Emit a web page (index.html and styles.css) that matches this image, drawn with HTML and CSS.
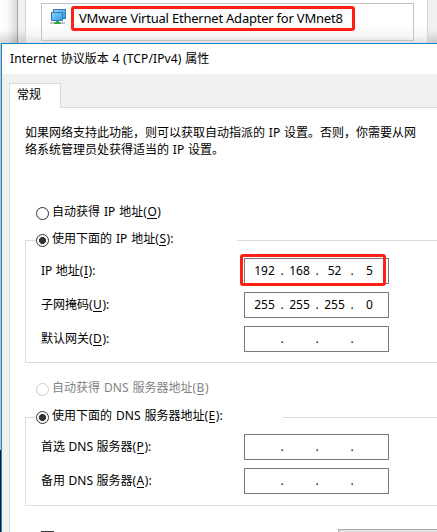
FILE: index.html
```
<!DOCTYPE html>
<html lang="zh-CN">
<head>
<meta charset="utf-8">
<title>Internet 协议版本 4 (TCP/IPv4) 属性</title>
<link rel="stylesheet" href="styles.css">
</head>
<body>
<div class="screen">
  <div class="parent">
    <div class="parent-page">
      <div class="adapter">
        <svg class="adapter-icon" width="18" height="17" viewBox="0 0 18 17">
          <defs><linearGradient id="g" x1="0" y1="0" x2="1" y2="1"><stop offset="0" stop-color="#8fd3fb"/><stop offset="1" stop-color="#2d9be8"/></linearGradient></defs>
          <rect x="3.5" y=".5" width="12" height="9" fill="url(#g)" stroke="#3a7cb0"/>
          <rect x="1.5" y="3.5" width="11" height="8" fill="url(#g)" stroke="#3a7cb0"/>
          <path d="M0 13h15v2H0z" fill="#bfc5c5"/>
          <path d="M6 12h3v1l2 1v1H4v-1l2-1z" fill="#2fa84a"/>
        </svg>
        <span class="adapter-name">VMware Virtual Ethernet Adapter for VMnet8</span>
      </div>
    </div>
  </div>
  <div class="dialog">
    <div class="title"><span class="latin">Internet</span> 协议版本 4 <span class="latin">(TCP/IPv4)</span> 属性</div>
    <div class="body">
      <div class="tab">常规</div>
      <div class="page">
        <p class="intro"><span>如果网络支持此功能，则可以获取自动指派的 IP 设置。否则，你需要从网</span><br><span>络系统管理员处获得适当的 IP 设置。</span></p>
        <div class="option auto-ip"><i class="radio"></i><span>自动获得 IP 地址(<u>O</u>)</span></div>
        <div class="group ip">
          <div class="option legend"><i class="radio on"></i><span>使用下面的 IP 地址(<u>S</u>):</span></div>
          <div class="row"><label>IP 地址(<u>I</u>):</label><div class="field marked"><b>192</b><i>.</i><b>168</b><i>.</i><b>52</b><i>.</i><b>5</b></div></div>
          <div class="row"><label>子网掩码(<u>U</u>):</label><div class="field"><b>255</b><i>.</i><b>255</b><i>.</i><b>255</b><i>.</i><b>0</b></div></div>
          <div class="row"><label>默认网关(<u>D</u>):</label><div class="field"><b></b><i>.</i><b></b><i>.</i><b></b><i>.</i><b></b></div></div>
        </div>
        <div class="option auto-dns"><i class="radio"></i><span>自动获得 DNS 服务器地址(<u>B</u>)</span></div>
        <div class="group dns">
          <div class="option legend"><i class="radio on"></i><span>使用下面的 DNS 服务器地址(<u>E</u>):</span></div>
          <div class="row"><label>首选 DNS 服务器(<u>P</u>):</label><div class="field"><b></b><i>.</i><b></b><i>.</i><b></b><i>.</i><b></b></div></div>
          <div class="row"><label>备用 DNS 服务器(<u>A</u>):</label><div class="field"><b></b><i>.</i><b></b><i>.</i><b></b><i>.</i><b></b></div></div>
        </div>
        <div class="footer"><div class="check"></div><div class="button"></div></div>
      </div>
    </div>
  </div>
</div>
</body>
</html>
```
FILE: styles.css
```
*, *::after { box-sizing: border-box; }
html, body { margin: 0; height: 532px; overflow: hidden; }
body { font: 12px/18px "Noto Sans", "Noto Sans CJK SC", sans-serif; color: #000; background: #fff; }
i, b { font-style: normal; font-weight: normal; }
u { text-decoration: none; box-shadow: inset 0 -1px #000; display: inline-block; height: 14px; line-height: 14px; margin: 0 .5px; }
.screen { width: 437px; height: 532px; overflow: hidden; background: linear-gradient(#c4c4c4 0 450px, #15181c 450px); }
.parent { height: 43px; padding-left: 25px; background: linear-gradient(transparent 30px, rgba(0,0,0,.16)), linear-gradient(90deg, #fff 0, #f8f8f8 8px, #d8d8d8 17px, #a9a9a9 17px 18px, #f0f0f0 18px); }
.parent-page { width: 403px; height: 43px; padding: 3px 0 0 15px; border: solid #d5d5d5; border-width: 0 1px; background: linear-gradient(#fff 24px, #f5f5f5 36px, #e0e0e0); }
.adapter { width: 373px; height: 38px; border: 1px solid #c4c4c4; display: flex; align-items: flex-start; }
.adapter-icon { margin: 5px 0 0 8px; flex: none; }
.adapter-name { margin: 2px 0 0 3px; width: 284px; height: 25px; border: 3px solid #ff2015; border-radius: 3px; padding-left: 5px; font-size: 13px; line-height: 19px; letter-spacing: -.22px; white-space: nowrap; }
.dialog { margin-left: 1px; height: 489px; border: solid #1c82cc; border-width: 1px 0 0 1px; background: #f0f0f0; }
.title { height: 30px; background: #fff; padding-left: 8px; line-height: 29px; word-spacing: .6px; white-space: nowrap; }
.latin { letter-spacing: .12px; }
.body { padding: 9px 0 0 7px; }
.tab { position: relative; z-index: 1; width: 52px; height: 25px; margin-bottom: -1px; border: 1px solid #d9d9d9; border-bottom: 0; background: #fff; padding-left: 7px; line-height: 21px; }
.page { height: 425px; border: solid #d9d9d9; border-width: 1px 0 0 1px; background: #fff; padding-left: 15px; }
.intro { margin: 0; padding-top: 16px; height: 98px; line-height: 17px; word-spacing: .7px; white-space: nowrap; }
.option { display: flex; align-items: flex-start; height: 18px; word-spacing: .9px; white-space: nowrap; }
.option > span { margin: -1px 0 0 3px; }
.radio { width: 13px; height: 13px; margin-top: 3px; border: 1px solid #333; border-radius: 50%; background: #fff; flex: none; }
.radio.on { background: radial-gradient(circle, #333 0 3.2px, #fff 3.8px); }
.auto-ip { margin: -2px 0 0 11px; }
.group { border: 1px solid #dcdcdc; border-right: 0; }
.ip { height: 123px; margin-top: 18px; }
.dns { height: 89px; margin-top: 19px; }
.legend { margin: -10px 0 9px 10px; background: #fff; }
.ip .legend { width: 201px; }
.dns .legend { width: 247px; margin-bottom: 8px; }
.row { display: flex; height: 26px; margin: 0 0 8px 15px; line-height: 26px; word-spacing: .4px; white-space: nowrap; }
.row label { width: 203px; }
.field { position: relative; width: 145px; height: 26px; border: 1px solid #7a7a7a; padding-left: 4px; display: grid; grid-template-columns: 31px 4px 31px 4px 31px 4px 31px; line-height: 23px; text-align: center; }
.marked::after { content: ""; position: absolute; left: -5px; top: -5px; width: 146px; height: 32px; border: 3px solid #ff2015; border-radius: 3px; }
.auto-dns { margin: 17px 0 0 11px; color: #838383; }
.auto-dns .radio { border-color: #ccc; }
.auto-dns u { box-shadow: inset 0 -1px #838383; }
.footer { display: flex; margin-top: 23px; }
.check { width: 13px; height: 13px; margin: 2px 0 0 16px; border: 1px solid #333; flex: none; }
.button { width: 110px; height: 23px; margin-left: 284px; border: 1px solid #adadad; background: #e1e1e1; flex: none; }
```
